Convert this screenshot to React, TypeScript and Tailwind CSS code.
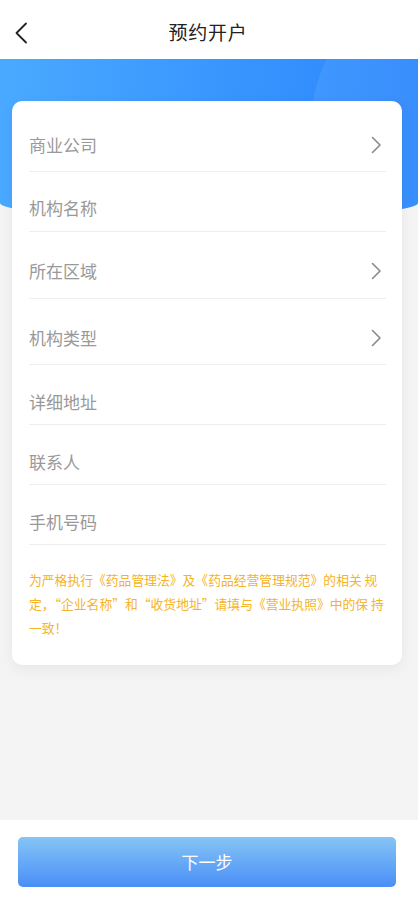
import React from "react";

const font = { fontFamily: '"Noto Sans CJK SC", "Noto Sans", sans-serif' };

function Chevron() {
  return (
    <svg width="11" height="18" viewBox="0 0 11 18" fill="none">
      <path d="M1.5 1.5 L9 9 L1.5 16.5" stroke="#8a8a8a" strokeWidth="1.6" strokeLinecap="round" strokeLinejoin="round" />
    </svg>
  );
}

const rows: { label: string; h: number; pb: number; arrow: boolean }[] = [
  { label: "商业公司", h: 71, pb: 15, arrow: true },
  { label: "机构名称", h: 60, pb: 12, arrow: false },
  { label: "所在区域", h: 67, pb: 16, arrow: true },
  { label: "机构类型", h: 66, pb: 15, arrow: true },
  { label: "详细地址", h: 60, pb: 11, arrow: false },
  { label: "联系人", h: 60, pb: 11, arrow: false },
  { label: "手机号码", h: 60, pb: 11, arrow: false },
];

export default function App() {
  return (
    <div className="w-[418px] h-[900px] bg-[#f4f4f4] flex flex-col overflow-hidden" style={font}>
      {/* header */}
      <div className="h-[59px] bg-white relative flex items-center justify-center shrink-0">
        <div className="absolute left-[14px] top-[22px]">
          <svg width="14" height="22" viewBox="0 0 14 22" fill="none">
            <path d="M12 1.5 L2.5 11 L12 20.5" stroke="#222" strokeWidth="1.8" strokeLinecap="round" strokeLinejoin="round" />
          </svg>
        </div>
        <span className="text-[19px] text-[#222] tracking-[0.8px] mt-[6px] ml-[-2px]">预约开户</span>
      </div>

      <div className="relative flex-1">
        {/* banner */}
        <div className="absolute left-0 top-0 w-[418px] h-[160px] overflow-hidden rounded-b-[50%_16px] bg-gradient-to-r from-[#4aa9ff] via-[#3a97fe] to-[#2a86fd]">
          <div className="absolute left-[312px] top-[-70px] w-[260px] h-[260px] rounded-full bg-white/[0.07]" />
        </div>

        <div className="relative pt-[42px] pl-[12px]">
          <div className="w-[390px] bg-white rounded-[10px] shadow-[0_4px_14px_rgba(0,0,0,0.06)] h-[564px] pl-[17px] pr-[16px]">
            {rows.map((r) => (
              <div
                key={r.label}
                className="flex items-end justify-between border-b border-[#eeeeee]"
                style={{ height: r.h, paddingBottom: r.pb }}
              >
                <span className="text-[17px] leading-[22px] text-[#999999]">{r.label}</span>
                {r.arrow && (
                  <span className="mr-[4px] mb-[2px] flex">
                    <Chevron />
                  </span>
                )}
              </div>
            ))}
            <div className="pt-[23px] text-[12.8px] leading-[24px] text-[#f5b327] whitespace-nowrap">
              <div>为严格执行《药品管理法》及《药品经营管理规范》的相关 规</div>
              <div>定，“企业名称”和“收货地址”请填与《营业执照》中的保 持</div>
              <div>一致！</div>
            </div>
          </div>
        </div>
      </div>

      {/* bottom bar */}
      <div className="h-[80px] bg-white shrink-0 pl-[18px] pt-[17px]">
        <div className="w-[378px] h-[50px] rounded-[5px] bg-gradient-to-b from-[#86c4f4] to-[#4a8ef7] flex items-center justify-center">
          <span className="text-white text-[17px]">下一步</span>
        </div>
      </div>
    </div>
  );
}
